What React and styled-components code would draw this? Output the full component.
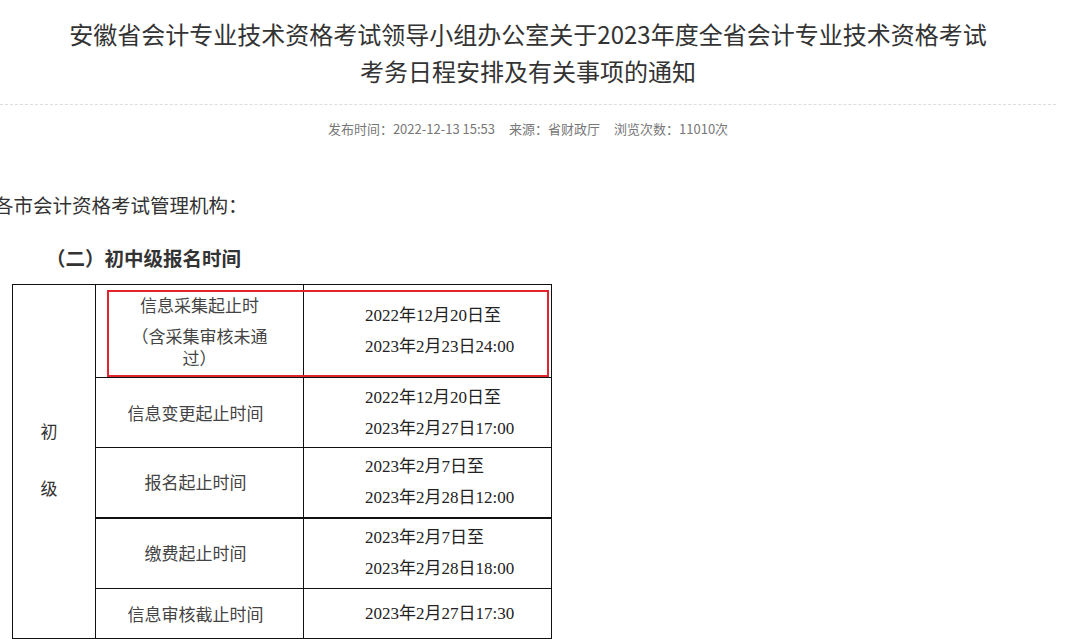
import styled, { createGlobalStyle } from "styled-components";

const GlobalStyle = createGlobalStyle`
  body {
    margin: 0;
    background: #fff;
    color: #333;
    font-family: "Noto Sans CJK SC", "Noto Sans", sans-serif;
  }
`;

const rows = [
  {
    height: 93,
    first: true,
    label: ["信息采集起止时", "（含采集审核未通过）"],
    dates: ["2022年12月20日至", "2023年2月23日24:00"],
  },
  {
    height: 70,
    label: ["信息变更起止时间"],
    dates: ["2022年12月20日至", "2023年2月27日17:00"],
  },
  {
    height: 70,
    label: ["报名起止时间"],
    dates: ["2023年2月7日至", "2023年2月28日12:00"],
  },
  {
    height: 71,
    thick: true,
    label: ["缴费起止时间"],
    dates: ["2023年2月7日至", "2023年2月28日18:00"],
  },
  {
    height: 50,
    label: ["信息审核截止时间"],
    dates: ["2023年2月27日17:30"],
  },
];

const App = () => {
  return (
    <Page>
      <GlobalStyle />
      <Header>
        <Title>
          安徽省会计专业技术资格考试领导小组办公室关于2023年度全省会计专业技术资格考试
          <br />
          考务日程安排及有关事项的通知
        </Title>
      </Header>
      <Divider />
      <Meta>
        <span>发布时间：2022-12-13 15:53</span>
        <span>来源：省财政厅</span>
        <span>浏览次数：11010次</span>
      </Meta>

      <Salutation>各市会计资格考试管理机构：</Salutation>
      <Heading>（二）初中级报名时间</Heading>

      <TableWrap>
        <Table>
          <colgroup>
            <col style={{ width: 83 }} />
            <col style={{ width: 208 }} />
            <col />
          </colgroup>
          <tbody>
            {rows.map((row, i) => (
              <Row key={i} $height={row.height} $thick={row.thick}>
                {i === 0 && (
                  <LevelCell rowSpan={rows.length}>
                    <LevelChar>初</LevelChar>
                    <LevelChar>级</LevelChar>
                  </LevelCell>
                )}
                <NameCell $first={row.first}>
                  {row.label.map((t) => (
                    <NameLine key={t}>{t}</NameLine>
                  ))}
                </NameCell>
                <DateCell>
                  {row.dates.map((t) => (
                    <DateLine key={t}>{t}</DateLine>
                  ))}
                </DateCell>
              </Row>
            ))}
          </tbody>
        </Table>
        <Highlight />
      </TableWrap>
    </Page>
  );
};

const Page = styled.div`
  width: 1056px;
  height: 639px;
  overflow: hidden;
  padding-top: 15px;
  box-sizing: border-box;
`;

const Header = styled.header`
  text-align: center;
`;

const Title = styled.h1`
  margin: 0;
  font-size: 24px;
  font-weight: 400;
  line-height: 37px;
  color: #333;
`;

const Divider = styled.hr`
  margin: 15px 0 0;
  height: 0;
  border: 0;
  border-top: 1px dashed #ddd;
`;

const Meta = styled.div`
  margin-top: 14px;
  font-size: 13px;
  line-height: 20px;
  color: #777;
  text-align: center;

  span + span {
    margin-left: 14px;
  }
`;

const Salutation = styled.p`
  margin: 52px 0 0 -6px;
  font-size: 19.5px;
  line-height: 28px;
  color: #333;
`;

const Heading = styled.h3`
  margin: 25px 0 0 46px;
  font-size: 19.5px;
  font-weight: 700;
  line-height: 28px;
  color: #333;
`;

const TableWrap = styled.div`
  position: relative;
  width: 540px;
  margin: 12px 0 0 12px;
`;

const Table = styled.table`
  width: 540px;
  border-collapse: collapse;
  table-layout: fixed;
`;

const Row = styled.tr`
  height: ${(p) => p.$height}px;

  td {
    border-top: ${(p) => (p.$thick ? "2px" : "1px")} solid #111;
  }
`;

const Cell = styled.td`
  border: 1px solid #111;
  padding: 0;
  text-align: center;
  vertical-align: middle;
`;

const LevelCell = styled(Cell)`
  padding: 0 10px 5px 0;
  font-size: 17px;
  color: #333;
`;

const LevelChar = styled.div`
  line-height: 28px;

  & + & {
    margin-top: 29px;
  }
`;

const NameCell = styled(Cell)`
  padding: ${(p) => (p.$first ? "0 32px" : "0 8px 0 0")};
  font-size: 17px;
  color: #444;
  white-space: ${(p) => (p.$first ? "normal" : "nowrap")};
`;

const NameLine = styled.div`
  line-height: 22px;

  & + & {
    margin-top: 9px;
  }
`;

const DateCell = styled(Cell)`
  padding-left: 61px;
  text-align: left;
  font-family: "Liberation Serif", "Noto Sans CJK SC", serif;
  font-size: 17px;
  color: #222;
`;

const DateLine = styled.div`
  line-height: 31px;
`;

const Highlight = styled.div`
  position: absolute;
  left: 95px;
  top: 6px;
  width: 442px;
  height: 87px;
  box-sizing: border-box;
  border: 2px solid #e3242b;
  pointer-events: none;
`;

export default App;
